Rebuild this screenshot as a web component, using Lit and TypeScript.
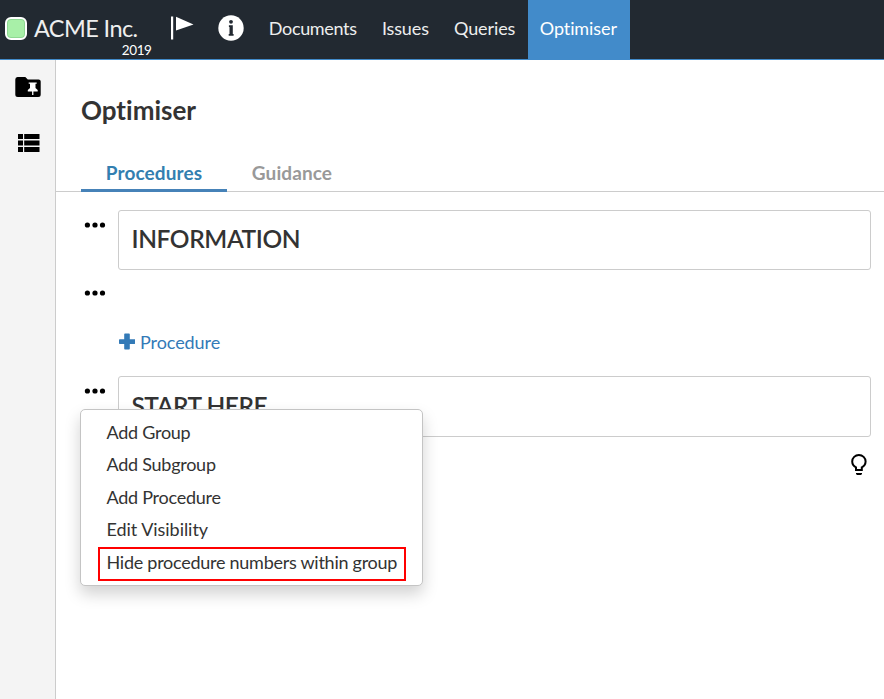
import { LitElement, html, css } from "lit";
import { customElement } from "lit/decorators.js";

@customElement("app-root")
export class AppRoot extends LitElement {
  static styles = css`
    :host { display: flex; flex-direction: column; height: 699px; overflow: hidden; background: #fff;
      font-family: Lato, "Liberation Sans", sans-serif; font-size: 18px; font-variant-ligatures: none; color: #333; }
    * { box-sizing: border-box; }
    svg { display: block; }
    h1, h2 { margin: 0; }
    .bar { display: flex; height: 60px; flex: none; background: #222931; border-bottom: 1px solid #428bca; color: #eee; }
    .status { width: 22px; height: 23px; margin: 17px 0 0 5px; border: 2px solid #fff; border-radius: 6px; background: #a8f0a8;
      box-shadow: inset 0 0 0 1px #8fd893; }
    .brand { display: flex; flex-direction: column; width: 124.5px; padding: 14px 0 0 7px; }
    .name { font-size: 23.5px; line-height: 28px; letter-spacing: -.6px; white-space: nowrap; }
    .year { font-size: 13.5px; line-height: 16px; letter-spacing: -.4px; align-self: flex-end; color: #fff; }
    .flag { margin: 16px 0 0 18.5px; }
    .info { margin: 15px 0 0 24px; }
    .nav { display: flex; margin-left: 12.2px; }
    .link { padding: 0 12.6px; line-height: 57px; height: 59px; letter-spacing: -.33px; white-space: nowrap; }
    .short { letter-spacing: -.12px; }
    .active { width: 102px; padding: 0 12px; letter-spacing: -.1px; background: #428bca; color: #fff; }
    .body { display: flex; flex: 1; min-height: 0; }
    .side { width: 56px; flex: none; background: #f4f4f4; border-right: 1px solid #ccc; padding-top: 17px; }
    .folder { margin-left: 15px; }
    .list { margin: 37px 0 0 18px; }
    .main { flex: 1; display: flex; flex-direction: column; }
    .title { height: 66px; font-size: 26px; line-height: 32px; font-weight: 700; padding: 34px 0 0 25px; }
    .tabs { display: flex; height: 66px; padding: 28px 0 0 25px; border-bottom: 1px solid #ccc; }
    .tab { width: 130px; height: 38px; text-align: center; line-height: 37px; font-size: 19px; letter-spacing: .1px; font-weight: 700; color: #999; }
    .selected { width: 146px; color: #337fb0; border-bottom: 3px solid #4682b8; }
    .rows { display: flex; flex-direction: column; padding: 18px 13px 0 28px; }
    .row { display: flex; }
    .dots { width: 34px; flex: none; padding-top: 12px; }
    .box { flex: 1; height: 60px; border: 1px solid #ccc; border-radius: 3px; padding-left: 12.5px; font-size: 24.5px; letter-spacing: -.4px; font-weight: 600; line-height: 56px; }
    .empty { height: 57px; padding-top: 8px; }
    .add { display: flex; align-items: center; gap: 5px; height: 30px; padding-left: 35px; letter-spacing: -.07px; color: #337ab7; }
    .plus { margin-top: -1px; }
    .group { position: relative; margin-top: 19px; }
    .tall { height: 61px; line-height: 58px; letter-spacing: -.5px; }
    .hint { align-self: flex-end; margin: 17px 4.5px 0 0; }
    .menu { position: absolute; left: -4px; top: 33px; width: 343px; height: 177px; padding: 5.8px 17px 0; background: #fff;
      border: 1px solid #c4c4c4; border-radius: 5px; box-shadow: 0 8px 16px rgba(0, 0, 0, .18); }
    .item { height: 32.5px; line-height: 32px; padding-left: 8.5px; letter-spacing: -.26px; white-space: nowrap; }
    .wide { letter-spacing: -.04px; }
    .marked { width: 308px; height: 34px; padding-left: 6.5px; margin-top: 1.2px; line-height: 27px; border: 2px solid #f00; }
  `;

  private dots() {
    return html`<svg width="22" height="6" viewBox="0 0 22 6"><circle cx="3.4" cy="3" r="2.6"/><circle cx="11" cy="3" r="2.6"/><circle cx="18.5" cy="3" r="2.6"/></svg>`;
  }

  render() {
    return html`
      <header class="bar">
        <div class="status"></div>
        <div class="brand"><span class="name">ACME Inc.</span><span class="year">2019</span></div>
        <svg class="flag" width="24" height="24" viewBox="0 0 24 24" fill="#fff"><path d="M1 .5h2.2v23H1zM6 .8 23.5 8.5 6 14.5z"/></svg>
        <svg class="info" width="26" height="26" viewBox="0 0 26 26"><circle cx="13" cy="13" r="12.7" fill="#fff"/><g fill="#222931"><circle cx="13" cy="6.8" r="1.9"/><path d="M10.9 10.3h3.9v8.6h.8v1.8h-4.9v-1.8h.8v-6.8h-.6z"/></g></svg>
        <nav class="nav">
          <a class="link">Documents</a><a class="link short">Issues</a><a class="link short">Queries</a><a class="link active">Optimiser</a>
        </nav>
      </header>
      <div class="body">
        <aside class="side">
          <svg class="folder" width="26" height="20" viewBox="0 0 26 20"><path d="M2.5 0h7.8l2.5 2.5h10.7A2.3 2.3 0 0 1 25.7 5v12.5a2.5 2.5 0 0 1-2.5 2.5H2.8A2.5 2.5 0 0 1 .3 17.5v-15A2.5 2.5 0 0 1 2.5 0z"/><path fill="#fff" d="M13.7 5.5h8v1.2h-1.2v4.4l2.2 2v1.3h-4.3V18h-1.3v-3.6h-4.3v-1.3l2.2-2V6.7h-1.3z"/></svg>
          <svg class="list" width="22" height="18" viewBox="0 0 22 18"><path d="M0 0h5v5H0zM6.2 0H21.5v5H6.2zM0 6.5h5v5H0zM6.2 6.5H21.5v5H6.2zM0 13h5v5H0zM6.2 13H21.5v5H6.2z"/></svg>
        </aside>
        <main class="main">
          <h1 class="title">Optimiser</h1>
          <div class="tabs"><div class="tab selected">Procedures</div><div class="tab">Guidance</div></div>
          <div class="rows">
            <div class="row"><div class="dots">${this.dots()}</div><h2 class="box">INFORMATION</h2></div>
            <div class="row empty"><div class="dots">${this.dots()}</div></div>
            <div class="add"><svg class="plus" width="16" height="17" viewBox="0 0 16 17" fill="#337ab7"><path d="M6 .5h4a.8.8 0 0 1 .8.8v4.9h4.7a.7.7 0 0 1 .7.7v3.3a.7.7 0 0 1-.7.7h-4.7v4.9a.8.8 0 0 1-.8.8H6a.8.8 0 0 1-.8-.8v-4.9H.7a.7.7 0 0 1-.7-.7V6.9a.7.7 0 0 1 .7-.7h4.5V1.3A.8.8 0 0 1 6 .5z"/></svg><span>Procedure</span></div>
            <div class="row group">
              <div class="dots">${this.dots()}</div><h2 class="box tall">START HERE</h2>
              <div class="menu">
                <div class="item">Add Group</div><div class="item">Add Subgroup</div><div class="item">Add Procedure</div><div class="item wide">Edit Visibility</div>
                <div class="item marked">Hide procedure numbers within group</div>
              </div>
            </div>
            <svg class="hint" width="16" height="22" viewBox="0 0 16 22"><path fill="none" stroke="#000" stroke-width="2" d="M5 16v-2.7A6.6 6.6 0 0 1 1.2 7.5a6.7 6.5 0 0 1 13.4 0 6.6 6.6 0 0 1-3.8 5.8V16z"/><path d="M5 19h6v1l-1 1H6l-1-1z"/></svg>
          </div>
        </main>
      </div>`;
  }
}
